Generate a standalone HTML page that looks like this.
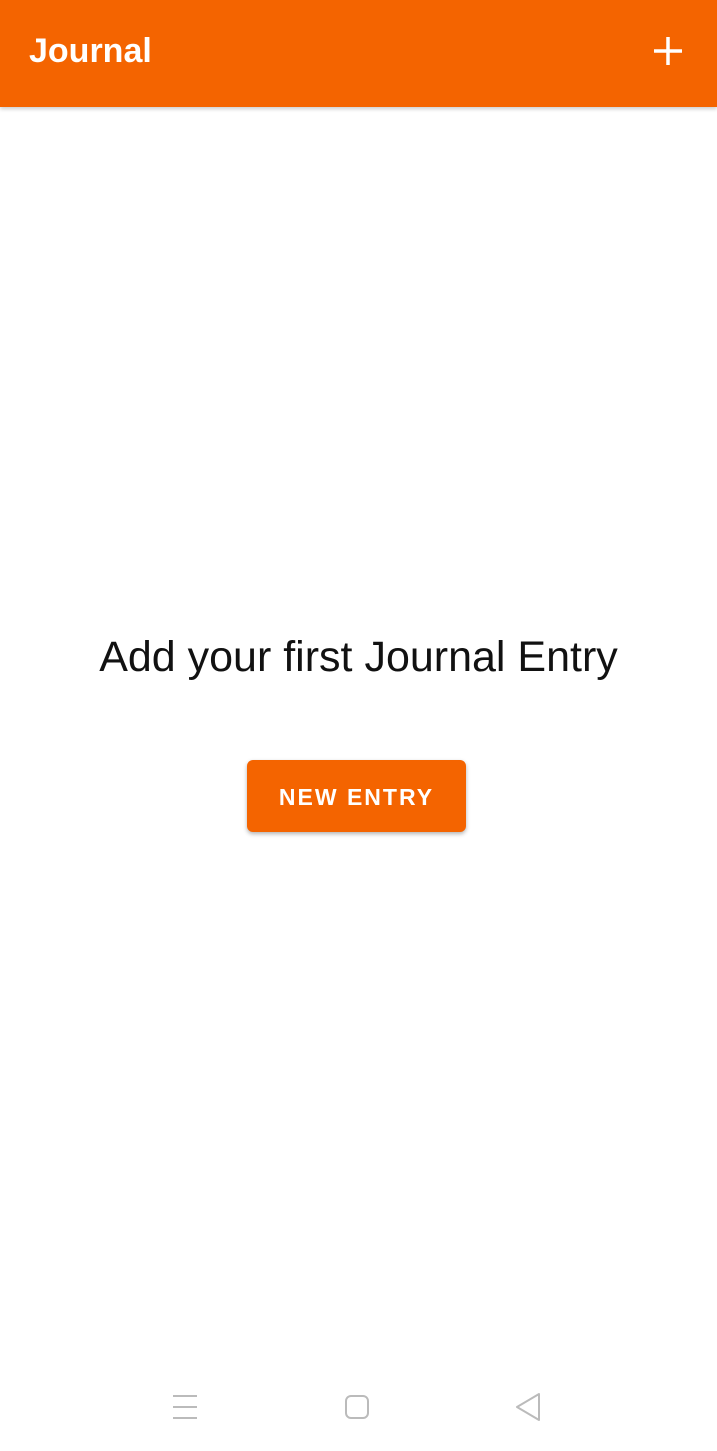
<!DOCTYPE html>
<html><head><meta charset="utf-8"><style>
body{margin:0;width:717px;height:1451px;background:#fff;position:relative;overflow:hidden;font-family:"Liberation Sans",sans-serif}
.bar{position:absolute;left:0;top:0;width:717px;height:107px;background:#f46400;box-shadow:0 2px 4px rgba(0,0,0,.2)}
.title{position:absolute;left:29px;top:32px;color:#fff;font-size:34px;font-weight:bold;letter-spacing:0}
.msg{position:absolute;left:0;width:717px;top:633px;text-align:center;font-size:43px;color:#111}
.btn{position:absolute;left:247px;top:760px;width:219px;height:72px;background:#f46400;border-radius:6px;box-shadow:0 2px 4px rgba(0,0,0,.3);color:#fff;font-size:23px;font-weight:bold;letter-spacing:2px;text-align:center;line-height:74px}
</style></head><body>
<div class="bar"><div class="title">Journal</div>
<svg style="position:absolute;left:652px;top:35px" width="32" height="32"><path d="M16 2V30M2 16H30" stroke="#fff" stroke-width="3.5"/></svg></div>
<div class="msg">Add your first Journal Entry</div>
<div class="btn">NEW ENTRY</div>
<svg style="position:absolute;left:0;top:1380px" width="717" height="50">
<g stroke="#bbb" stroke-width="2" fill="none">
<path d="M173 16H197M173 27H197M173 38H197"/>
<rect x="346" y="16" width="22" height="22" rx="5"/>
<path d="M539 14L517 27L539 40Z" stroke-linejoin="round"/>
</g></svg>
</body></html>
